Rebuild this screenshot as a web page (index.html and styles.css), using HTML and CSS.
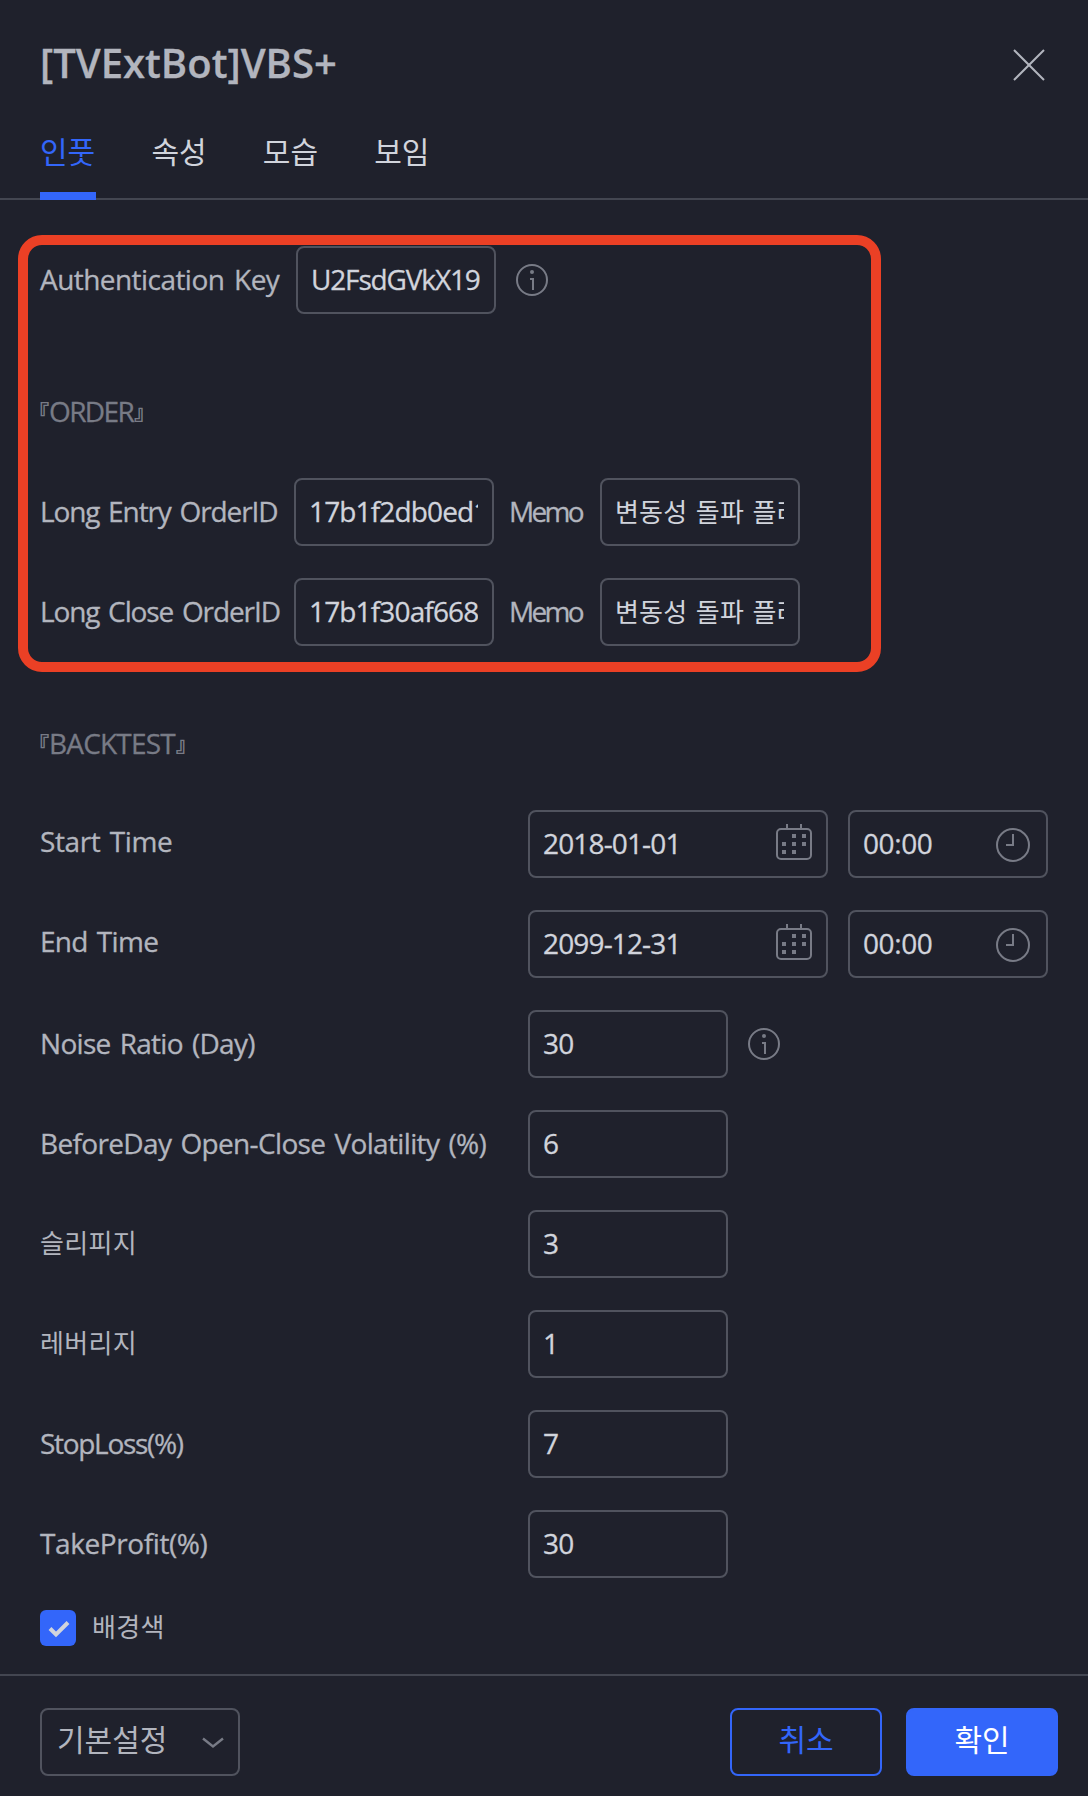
FILE: index.html
```html
<!DOCTYPE html>
<html lang="ko">
<head>
<meta charset="utf-8">
<title>[TVExtBot]VBS+</title>
<link rel="stylesheet" href="styles.css">
</head>
<body>
<svg width="0" height="0" class="defs">
  <symbol id="info" viewBox="0 0 32 32">
    <circle cx="16" cy="16" r="15" fill="none" stroke="currentColor" stroke-width="2"/>
    <circle cx="16" cy="8" r="2" fill="currentColor"/>
    <path d="M14 15h3v11" fill="none" stroke="currentColor" stroke-width="2"/>
  </symbol>
  <symbol id="calendar" viewBox="0 0 36 36">
    <rect x="1" y="5" width="34" height="30" rx="4" fill="none" stroke="currentColor" stroke-width="2"/>
    <path d="M11 0v4M25 0v4" stroke="currentColor" stroke-width="2"/>
    <path d="M16 10h4v4h-4zM26 10h4v4h-4zM6 18h4v4h-4zM16 18h4v4h-4zM26 18h4v4h-4zM6 26h4v4h-4zM16 26h4v4h-4z" fill="currentColor"/>
  </symbol>
  <symbol id="clock" viewBox="0 0 34 34">
    <circle cx="17" cy="17" r="16" fill="none" stroke="currentColor" stroke-width="2"/>
    <path d="M17 6v11h-7" fill="none" stroke="currentColor" stroke-width="2"/>
  </symbol>
</svg>
<main class="dialog">
  <header class="header">
    <h1 class="title">[TVExtBot]VBS+</h1>
    <svg class="close" viewBox="0 0 32 32"><path d="M1 1l30 30M31 1L1 31" stroke="currentColor" stroke-width="2" fill="none"/></svg>
  </header>
  <nav class="tabs">
    <a class="tab active">인풋</a>
    <a class="tab">속성</a>
    <a class="tab">모습</a>
    <a class="tab">보임</a>
  </nav>
  <section class="content">
    <div class="highlight"></div>
    <div class="row inline">
      <label class="label key">Authentication Key</label>
      <input class="field auth" value="U2FsdGVkX19">
      <svg class="info"><use href="#info"/></svg>
    </div>
    <h2 class="group order"><span class="bracket">『</span>ORDER<span class="bracket">』</span></h2>
    <div class="row inline">
      <label class="label id">Long Entry OrderID</label>
      <input class="field" value="17b1f2db0ed1">
      <label class="label memo-label">Memo</label>
      <input class="field memo" value="변동성 돌파 플러스">
    </div>
    <div class="row inline">
      <label class="label id">Long Close OrderID</label>
      <input class="field" value="17b1f30af668">
      <label class="label memo-label">Memo</label>
      <input class="field memo" value="변동성 돌파 플러스">
    </div>
    <h2 class="group"><span class="bracket">『</span>BACKTEST<span class="bracket">』</span></h2>
    <div class="row">
      <label class="label raised start">Start Time</label>
      <div class="field date"><span>2018-01-01</span><svg class="calendar"><use href="#calendar"/></svg></div>
      <div class="field time"><span>00:00</span><svg class="clock"><use href="#clock"/></svg></div>
    </div>
    <div class="row">
      <label class="label raised">End Time</label>
      <div class="field date"><span>2099-12-31</span><svg class="calendar"><use href="#calendar"/></svg></div>
      <div class="field time"><span>00:00</span><svg class="clock"><use href="#clock"/></svg></div>
    </div>
    <div class="row">
      <label class="label">Noise Ratio (Day)</label>
      <input class="field" value="30">
      <svg class="info"><use href="#info"/></svg>
    </div>
    <div class="row">
      <label class="label long">BeforeDay Open-Close Volatility (%)</label>
      <input class="field" value="6">
    </div>
    <div class="row">
      <label class="label ko">슬리피지</label>
      <input class="field" value="3">
    </div>
    <div class="row">
      <label class="label ko">레버리지</label>
      <input class="field" value="1">
    </div>
    <div class="row">
      <label class="label stop">StopLoss(%)</label>
      <input class="field" value="7">
    </div>
    <div class="row">
      <label class="label profit">TakeProfit(%)</label>
      <input class="field" value="30">
    </div>
    <div class="check-row">
      <span class="checkbox"><svg viewBox="0 0 36 36"><path d="M10 18.500l6 6L28 12.500" fill="none" stroke="currentColor" stroke-width="4"/></svg></span>
      <label class="label ko">배경색</label>
    </div>
  </section>
  <footer class="footer">
    <button class="button select">기본설정<svg viewBox="0 0 22 12"><path d="M1 1.500l10 8 10-8" fill="none" stroke="currentColor" stroke-width="2.400"/></svg></button>
    <button class="button cancel">취소</button>
    <button class="button ok">확인</button>
  </footer>
</main>
</body>
</html>
```
FILE: styles.css
```css
* { box-sizing: border-box; }

body {
  margin: 0;
  background: #1f212c;
  color: #b2b5be;
  font-family: "Open Sans", "Noto Sans CJK KR", sans-serif;
  font-size: 28px;
  font-weight: 400;
}

.defs { display: block; }

.dialog {
  display: flex;
  flex-direction: column;
  width: 1088px;
  height: 1796px;
}

.header {
  display: flex;
  justify-content: space-between;
  align-items: flex-start;
  height: 112px;
  padding: 42px 43px 0 40px;
}

.title {
  margin: 0;
  font-size: 40px;
  font-weight: 600;
  line-height: 42px;
  letter-spacing: 0;
  -webkit-text-stroke: 0.3px currentColor;
}

.close { width: 32px; height: 32px; margin-top: 7px; color: #b2b5be; }

.tabs {
  display: flex;
  gap: 55.400px;
  height: 88px;
  padding-left: 40px;
  border-bottom: 2px solid #434651;
}

.tab {
  width: 56px;
  height: 88px;
  font-size: 30px;
  line-height: 80px;
  color: #d1d4dc;
  white-space: nowrap;
}

.tab.active { color: #3366fa; border-bottom: 8px solid #3366fa; }

.content {
  position: relative;
  display: flex;
  flex-direction: column;
  gap: 32px;
  height: 1474px;
  padding: 46px 40px 0;
}

/* Frame drawn over the order settings */
.highlight {
  position: absolute;
  left: 18px;
  top: 35px;
  width: 863px;
  height: 437px;
  border: 10px solid #eb4025;
  border-radius: 24px;
}

.row { display: flex; align-items: center; height: 68px; }

.label {
  width: 488px;
  padding-bottom: 2px;
  line-height: 40px;
  letter-spacing: -0.7px;
  word-spacing: 2.500px;
  white-space: nowrap;
  -webkit-text-stroke: 0.3px currentColor;
}

.label.raised { padding-bottom: 6px; }
.label.start { letter-spacing: -0.4px; }
.label.long { letter-spacing: -0.65px; word-spacing: 2.500px; }
.label.stop { letter-spacing: -1.300px; }
.label.profit { letter-spacing: -0.4px; }
.label.ko { padding-bottom: 2px; font-size: 26px; letter-spacing: 0.3px; -webkit-text-stroke: 0; }
.inline .label.key { width: 256px; letter-spacing: -0.55px; word-spacing: 3px; }
.inline .label.id { width: 254px; letter-spacing: -1.100px; }
.inline .label.memo-label { width: 91px; margin-left: 15px; letter-spacing: -2.700px; }

.field {
  display: flex;
  align-items: center;
  justify-content: space-between;
  width: 200px;
  height: 68px;
  padding: 0 14px 2px 13px;
  border: 2px solid #50535e;
  border-radius: 8px;
  background: transparent;
  color: #d1d4dc;
  font: inherit;
  letter-spacing: -0.85px;
  outline: none;
  -webkit-text-stroke: 0.3px currentColor;
}

.field.auth { letter-spacing: -1.150px; }
.field.memo { padding-bottom: 2px; font-size: 26px; letter-spacing: 0.2px; word-spacing: 1.500px; -webkit-text-stroke: 0; }
.field.date { width: 300px; }
.field.time { margin-left: 20px; padding-right: 16px; letter-spacing: -0.4px; }

.calendar { width: 36px; height: 36px; margin-bottom: 2px; color: #787b86; }
.clock { width: 34px; height: 34px; margin-top: 4px; color: #787b86; }
.info { width: 32px; height: 32px; margin-left: 20px; color: #787b86; }

.group {
  display: flex;
  align-items: center;
  height: 100px;
  margin: 0;
  padding-top: 30px;
  font-size: 28px;
  font-weight: 400;
  letter-spacing: -0.8px;
  color: #787b86;
  -webkit-text-stroke: 0.3px currentColor;
}

.group.order { letter-spacing: -1.600px; }

.bracket {
  width: 10px;
  margin-left: -1px;
  font-size: 20px;
  letter-spacing: 0;
  font-feature-settings: "halt";
  -webkit-text-stroke: 0.6px currentColor;
}

.bracket:last-child { margin-left: 1px; }

.check-row { display: flex; align-items: center; gap: 16px; height: 36px; }

.checkbox {
  width: 36px;
  height: 36px;
  border-radius: 6px;
  background: #3366fa;
  color: #d1d4dc;
}

.checkbox svg { display: block; }

.footer {
  display: flex;
  align-items: flex-start;
  height: 122px;
  padding: 32px 30px 0 40px;
  border-top: 2px solid #434651;
}

.button {
  display: flex;
  align-items: center;
  justify-content: center;
  width: 152px;
  height: 68px;
  padding: 0 0 8px;
  border: 2px solid #3366fa;
  border-radius: 8px;
  background: transparent;
  font: inherit;
  font-size: 30px;
}

.select {
  justify-content: space-between;
  width: 200px;
  padding: 0 14px 8px 15px;
  margin-right: auto;
  border-color: #50535e;
  color: #b2b5be;
}

.select svg { width: 22px; height: 12px; margin-top: 10px; color: #787b86; }
.cancel { color: #3366fa; }
.ok { margin-left: 24px; background: #3366fa; color: #fff; }
```
